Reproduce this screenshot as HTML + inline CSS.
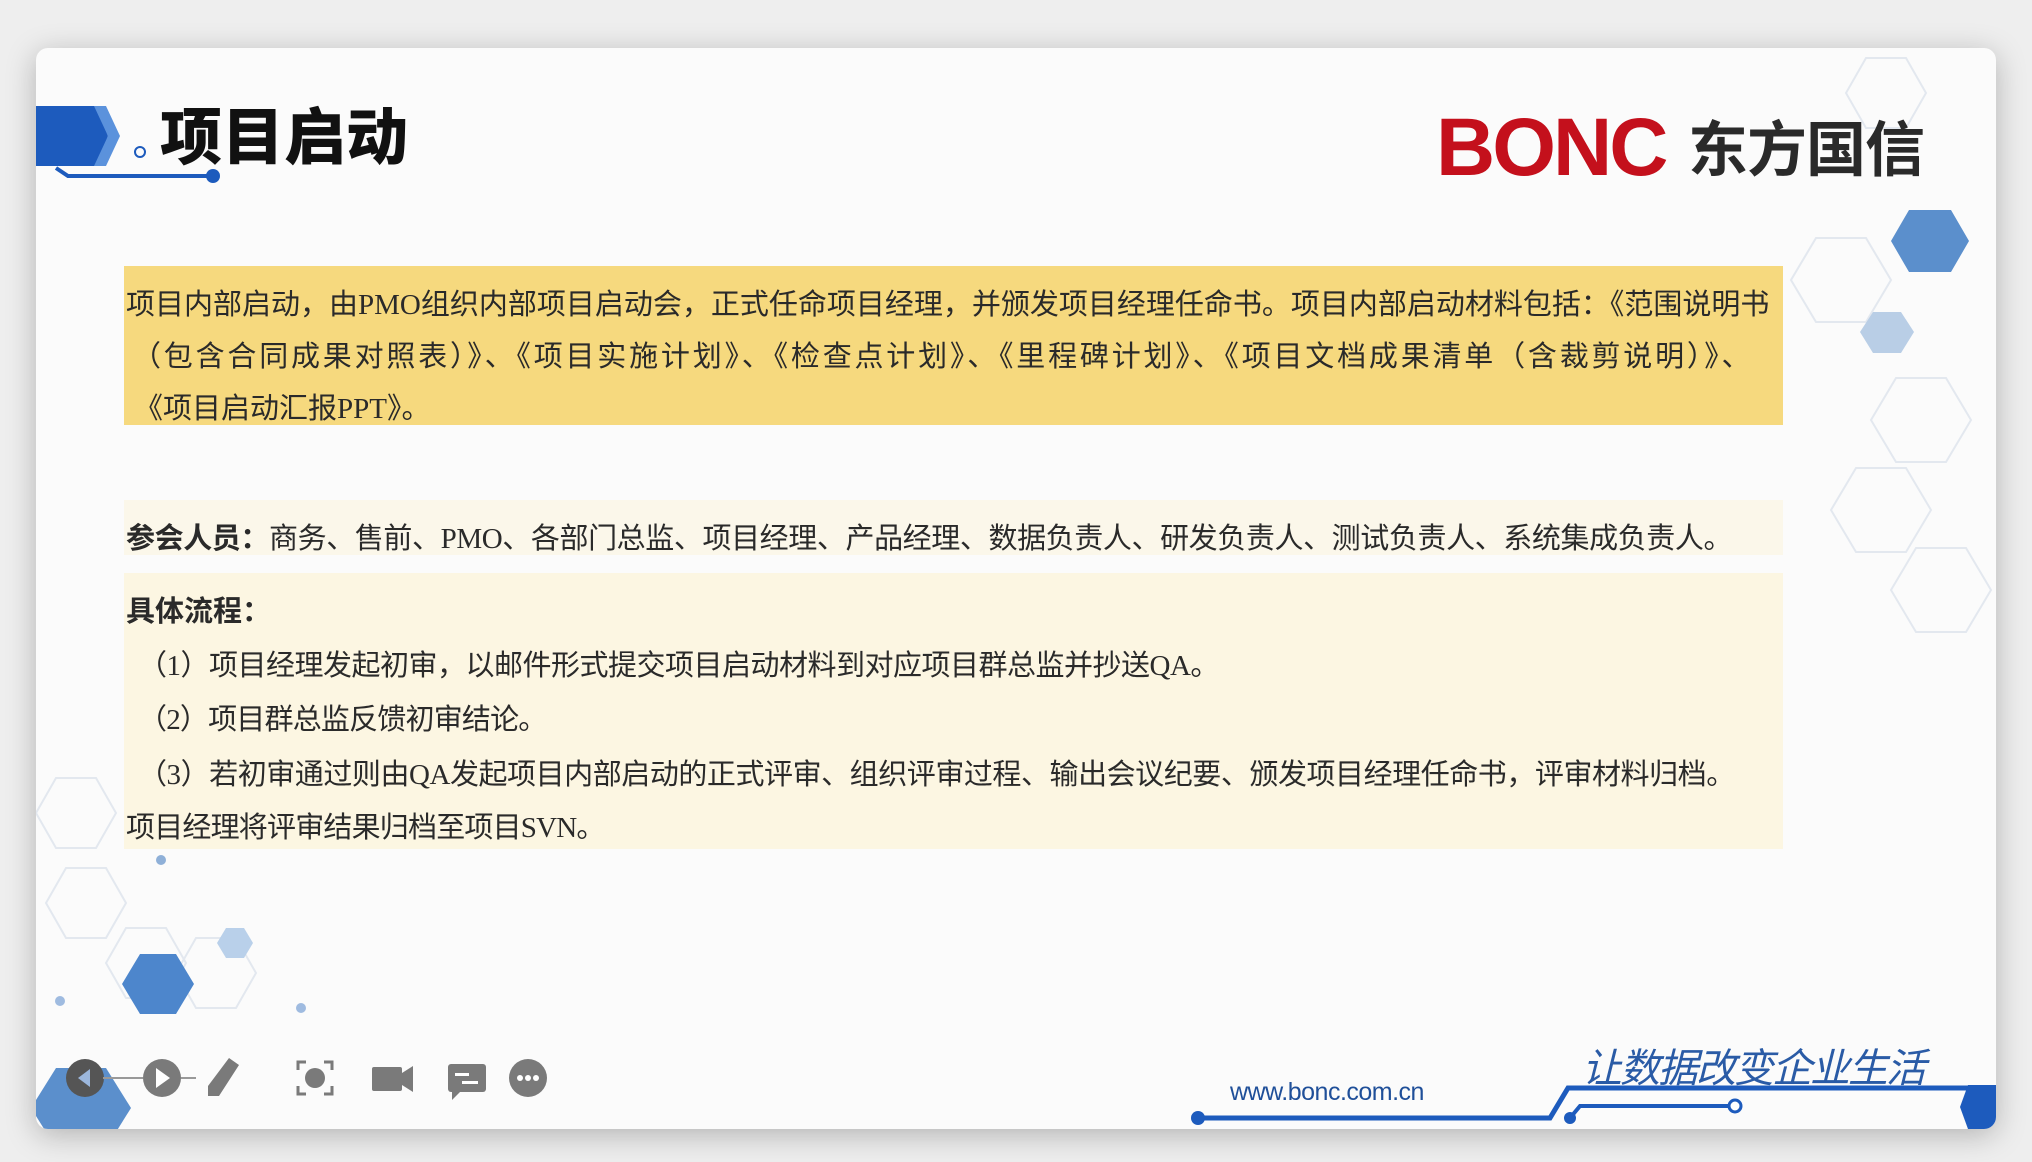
<!DOCTYPE html>
<html><head><meta charset="utf-8">
<style>
html,body{margin:0;padding:0;}
body{width:2032px;height:1162px;background:#eeeeee;position:relative;overflow:hidden;font-family:"Liberation Serif","Noto Serif CJK SC","Noto Sans CJK SC",serif;}
.slide{position:absolute;left:36px;top:48px;width:1960px;height:1081px;background:#fbfbfb;border-radius:12px;box-shadow:0 6px 30px rgba(0,0,0,0.25);overflow:hidden;}
.abs{position:absolute;}
.t{position:absolute;white-space:nowrap;color:#2a2a2a;font-size:29px;font-family:"Liberation Serif","Noto Sans CJK SC",sans-serif;}
.cjk{font-family:"Noto Sans CJK SC",sans-serif;}
</style></head><body>
<div class="slide">
<svg class="abs" style="left:0;top:0" width="1960" height="1081">
  <g fill="none" stroke="#e3e8ef" stroke-width="2">
    <polygon points="1830,10 1870,10 1890,45 1870,80 1830,80 1810,45"/>
    <polygon points="1780,190 1830,190 1855,232 1830,274 1780,274 1755,232"/>
    <polygon points="1860,330 1910,330 1935,372 1910,414 1860,414 1835,372"/>
    <polygon points="1820,420 1870,420 1895,462 1870,504 1820,504 1795,462"/>
    <polygon points="1880,500 1930,500 1955,542 1930,584 1880,584 1855,542"/>
    <polygon points="20,730 60,730 80,765 60,800 20,800 0,765"/>
    <polygon points="30,820 70,820 90,855 70,890 30,890 10,855"/>
    <polygon points="90,880 130,880 150,915 130,950 90,950 70,915"/>
    <polygon points="160,890 200,890 220,925 200,960 160,960 140,925"/>
  </g>
  <polygon points="1873,162 1915,162 1933,193 1915,224 1873,224 1855,193" fill="#5b8fcc"/>
  <polygon points="1837,264 1865,264 1878,284 1865,305 1837,305 1824,284" fill="#b9cee6"/>
  <polygon points="104,906 140,906 158,936 140,966 104,966 86,936" fill="#4d86cc"/>
  <polygon points="190,880 208,880 217,895 208,910 190,910 181,895" fill="#b9d0ea"/>
  <polygon points="20,1020 70,1020 95,1060 70,1100 20,1100 -5,1060" fill="#5b8fcc"/>
  <circle cx="125" cy="812" r="5" fill="#8fb0d8"/>
  <circle cx="24" cy="953" r="5" fill="#9fbbe0"/>
  <circle cx="265" cy="960" r="5" fill="#9fbbe0"/>
  <polygon points="0,58 60,58 72,88 60,118 0,118" fill="#1d5bbd"/>
  <polygon points="58,58 70,58 84,88 70,118 58,118 72,88" fill="#5b92dc"/>
  <circle cx="104" cy="104" r="5" fill="none" stroke="#1d5bbd" stroke-width="2"/>
  <path d="M20,120 L32,128 L177,128" stroke="#1d5bbd" stroke-width="4" fill="none"/>
  <circle cx="177" cy="128" r="7" fill="#1d5bbd"/>
  <path d="M1162,1070 L1514,1070 L1532,1040 L1960,1040" stroke="#1d5bbd" stroke-width="5" fill="none"/>
  <circle cx="1162" cy="1070" r="7" fill="#1d5bbd"/>
  <path d="M1534,1070 L1544,1058 L1694,1058" stroke="#1d5bbd" stroke-width="4" fill="none"/>
  <circle cx="1534" cy="1070" r="6" fill="#1d5bbd"/>
  <circle cx="1699" cy="1058" r="6" fill="#fff" stroke="#1d5bbd" stroke-width="3"/>
  <polygon points="1932,1037 1965,1037 1965,1081 1932,1081 1924,1059" fill="#1d5bbd"/>
  <g fill="#7a7a7a">
    <circle cx="49" cy="1030" r="19" fill="#555"/><polygon points="54,1021 42,1030 54,1039" fill="#9cb7dc"/>
    <circle cx="126" cy="1030" r="19"/><polygon points="120,1020 134,1030 120,1040" fill="#fff"/>
    <line x1="67" y1="1030" x2="107" y2="1030" stroke="#999" stroke-width="2"/>
    <line x1="145" y1="1030" x2="160" y2="1030" stroke="#999" stroke-width="2"/>
    <polygon points="193,1010 203,1017 183,1048 172,1048 172,1038"/>
    <circle cx="279" cy="1030" r="10"/>
    <path d="M262,1022 v-8 h8 M288,1014 h8 v8 M296,1038 v8 h-8 M270,1046 h-8 v-8" stroke="#7a7a7a" stroke-width="3" fill="none"/>
    <rect x="336" y="1019" width="30" height="24" rx="2"/><polygon points="366,1025 377,1018 377,1044 366,1037"/>
    <rect x="412" y="1016" width="38" height="28" rx="3"/><polygon points="416,1044 424,1044 416,1052"/>
    <rect x="419" y="1025" width="14" height="3" fill="#fff"/><rect x="426" y="1033" width="16" height="3" fill="#fff"/>
    <circle cx="492" cy="1030" r="19"/>
    <circle cx="484" cy="1030" r="3" fill="#fff"/><circle cx="492" cy="1030" r="3" fill="#fff"/><circle cx="500" cy="1030" r="3" fill="#fff"/>
  </g>
</svg>
<div class="abs cjk" style="left:124px;top:44px;font-size:62px;font-weight:900;color:#111;line-height:80px;letter-spacing:0px">项目启动</div>
<div class="abs" style="left:1400px;top:60px;font-family:'Liberation Sans',sans-serif;font-weight:bold;font-size:82px;color:#c4101c;line-height:80px;letter-spacing:-3px">BONC</div>
<div class="abs cjk" style="left:1652px;top:58px;font-size:60px;font-weight:bold;color:#2a2a2a;line-height:80px;letter-spacing:-1px">东方国信</div>
<div class="abs" style="left:88px;top:218px;width:1659px;height:159px;background:#f6d97e"></div>
<div class="abs" style="left:88px;top:452px;width:1659px;height:55px;background:#fbf7ea"></div>
<div class="abs" style="left:88px;top:525px;width:1659px;height:276px;background:#fcf6e2"></div>
<div class="t" style="left:90px;top:233px;letter-spacing:0px">项目内部启动，由PMO组织内部项目启动会，正式任命项目经理，并颁发项目经理任命书。项目内部启动材料包括：《范围说明书</div>
<div class="t" style="left:96px;top:285px;letter-spacing:2.8px">（包含合同成果对照表）》、《项目实施计划》、《检查点计划》、《里程碑计划》、《项目文档成果清单（含裁剪说明）》、</div>
<div class="t" style="left:98px;top:337px">《项目启动汇报PPT》。</div>
<div class="t" style="left:90px;top:467px;letter-spacing:-0.4px"><b>参会人员：</b>商务、售前、PMO、各部门总监、项目经理、产品经理、数据负责人、研发负责人、测试负责人、系统集成负责人。</div>
<div class="t" style="left:90px;top:540px"><b>具体流程：</b></div>
<div class="t" style="left:102px;top:594px;letter-spacing:-0.5px">（1）项目经理发起初审，以邮件形式提交项目启动材料到对应项目群总监并抄送QA。</div>
<div class="t" style="left:102px;top:648px;letter-spacing:-0.8px">（2）项目群总监反馈初审结论。</div>
<div class="t" style="left:102px;top:703px;letter-spacing:-0.45px">（3）若初审通过则由QA发起项目内部启动的正式评审、组织评审过程、输出会议纪要、颁发项目经理任命书，评审材料归档。</div>
<div class="t" style="left:90px;top:756px;letter-spacing:-0.8px">项目经理将评审结果归档至项目SVN。</div>
<div class="abs" style="left:1194px;top:1030px;font-family:'Liberation Sans',sans-serif;font-size:25px;color:#1f4f99;letter-spacing:-0.5px">www.bonc.com.cn</div>
<div class="abs cjk" style="left:1546px;top:988px;font-size:40px;color:#2a5ba6;font-style:italic;letter-spacing:-2px">让数据改变企业生活</div>
</div>
</body></html>
